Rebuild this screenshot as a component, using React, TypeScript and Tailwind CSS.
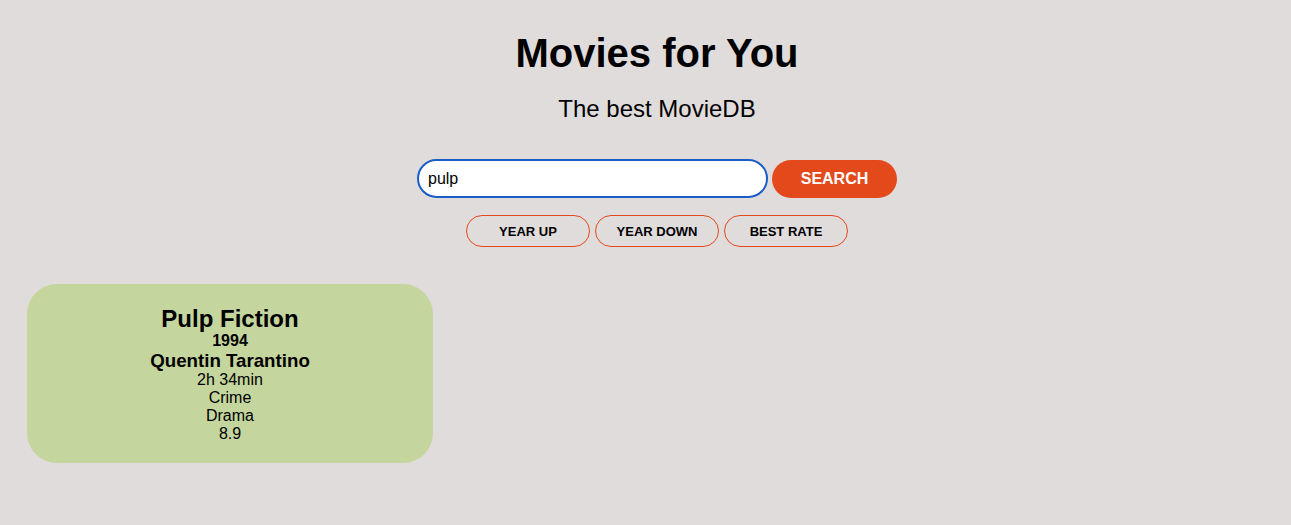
export default function App() {
  return (
    <div className="min-h-screen bg-[#e1dcdc] text-black font-['Liberation_Sans',Arial,sans-serif]">
      <header className="flex flex-col items-center pt-[31px] pl-[23px]">
        <h1 className="text-[40px] font-bold leading-[44px]">Movies for You</h1>
        <p className="mt-[20px] text-[24px] leading-[28px]">The best MovieDB</p>

        <div className="mt-[36px] flex gap-[4px]">
          <input
            defaultValue="pulp"
            className="w-[351px] h-[39px] rounded-full bg-white border-2 border-[#1a5cc8] px-[9px] text-[16px] outline-none"
          />
          <button className="w-[125px] h-[38px] mt-[1px] rounded-full bg-[#e4491b] text-white font-bold text-[16px]">
            SEARCH
          </button>
        </div>

        <div className="mt-[17px] flex gap-[5px]">
          {["YEAR UP", "YEAR DOWN", "BEST RATE"].map((label) => (
            <button
              key={label}
              className="w-[124px] h-[32px] pt-[2px] rounded-full border border-[#e4491b] text-[13px] font-bold"
            >
              {label}
            </button>
          ))}
        </div>
      </header>

      <main className="mt-[37px] px-[27px]">
        <div className="w-[406px] rounded-[30px] bg-[#c4d59d] pt-[21px] pb-[20px] flex flex-col items-center text-center">
          <h2 className="text-[24px] font-bold leading-[27px]">Pulp Fiction</h2>
          <p className="text-[16px] font-bold leading-[18px]">1994</p>
          <p className="text-[18.72px] font-bold leading-[21px]">Quentin Tarantino</p>
          <p className="text-[16px] leading-[18px]">2h 34min</p>
          <p className="text-[16px] leading-[18px]">Crime</p>
          <p className="text-[16px] leading-[18px]">Drama</p>
          <p className="text-[16px] leading-[18px]">8.9</p>
        </div>
      </main>
    </div>
  )
}
